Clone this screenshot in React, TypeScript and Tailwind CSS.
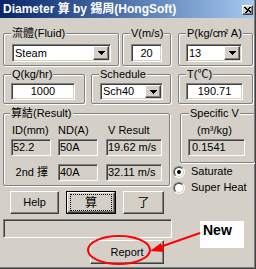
import React from 'react';

const sunken =
  'border border-t-[#808080] border-l-[#808080] border-r-white border-b-white shadow-[inset_1px_1px_0_#404040,inset_-1px_-1px_0_#d4d0c8]';
const raised =
  'border border-t-white border-l-white border-r-[#404040] border-b-[#404040] shadow-[inset_-1px_-1px_0_#808080]';
const etched = 'border border-[#808080] rounded-[2px] shadow-[inset_1px_1px_0_#fff,1px_1px_0_#fff]';

function Group({
  label,
  labelClass,
  boxClass,
  className = '',
  children,
}: {
  label: React.ReactNode;
  labelClass: string;
  boxClass: string;
  className?: string;
  children: React.ReactNode;
}) {
  return (
    <div className={`flex flex-col items-start ${className}`}>
      <span className={`relative z-10 -mb-[7px] h-[13px] px-px leading-[13px] bg-[#d4d0c8] whitespace-nowrap ${labelClass}`}>
        {label}
      </span>
      <div className={`${etched} ${boxClass}`}>{children}</div>
    </div>
  );
}

function Combo({ value, className }: { value: string; className: string }) {
  return (
    <div className={`flex items-center p-px bg-white ${sunken} ${className}`}>
      <span className="flex-1 pl-px leading-[13px]">{value}</span>
      <span className={`w-[16px] h-full flex items-center justify-center bg-[#d4d0c8] ${raised}`}>
        <svg width="7" height="4" shapeRendering="crispEdges">
          <path d="M0 0h7v1h-1v1h-1v1h-1v1h-1v-1h-1v-1h-1v-1h-1z" fill="#000" />
        </svg>
      </span>
    </div>
  );
}

function Edit({ value, className }: { value: string; className: string }) {
  return (
    <div className={`flex items-center justify-center bg-white leading-[13px] ${sunken} ${className}`}>{value}</div>
  );
}

function Field({ value, className }: { value: string; className: string }) {
  return (
    <div className={`flex items-center h-[17px] bg-[#d4d0c8] leading-[13px] whitespace-nowrap ${sunken} ${className}`}>
      {value}
    </div>
  );
}

function Radio({ label, checked, className }: { label: string; checked?: boolean; className: string }) {
  return (
    <div className={`flex items-center h-[13px] ${className}`}>
      <span className="flex w-[12px] h-[12px] rounded-full border border-t-[#808080] border-l-[#808080] border-r-white border-b-white">
        <span className="flex flex-1 items-center justify-center rounded-full border border-t-[#404040] border-l-[#404040] border-r-[#d4d0c8] border-b-[#d4d0c8] bg-white">
          {checked && <span className="w-[4px] h-[4px] rounded-full bg-black" />}
        </span>
      </span>
      <span className="ml-[6px] leading-[13px] whitespace-nowrap">{label}</span>
    </div>
  );
}

export default function App() {
  return (
    <div className="relative w-[256px] h-[269px] overflow-hidden border-r border-b border-[#404040] bg-[#d4d0c8] text-[11px] text-black font-['Liberation_Sans','Noto_Sans_CJK_TC',sans-serif]">
      <div className="flex flex-col h-full border-r border-b border-[#808080]">
        {/* title bar */}
        <div className="flex items-start h-[18px] pl-[3px] pr-px bg-linear-to-r from-[#0a246a] to-[#a6caf0]">
          <span className="flex-1 text-[12px] leading-[18px] font-bold text-white whitespace-nowrap">
            Diameter 算 by 錫周(HongSoft)
          </span>
          <span className={`mt-[5px] w-[11px] h-[10px] flex items-center justify-center bg-[#d4d0c8] ${raised}`}>
            <svg width="7" height="6" shapeRendering="crispEdges">
              <path d="M0 0h2v1h1v1h1v-1h1v-1h2v1h-1v1h-1v1h1v1h1v1h1v1h-2v-1h-1v-1h-1v1h-1v1h-2v-1h1v-1h1v-1h-1v-1h-1z" fill="#000" />
            </svg>
          </span>
        </div>

        <div className="flex flex-col pl-[3px] pt-[9px]">
          {/* row 1 */}
          <div className="flex">
            <Group label="流體(Fluid)" labelClass="ml-[8px]" boxClass="w-[116px] h-[33px] pt-[10px] pl-[8px]">
              <Combo value="Steam" className="w-[99px] h-[18px]" />
            </Group>
            <Group className="ml-[3px]" label="V(m/s)" labelClass="ml-[8px]" boxClass="w-[49px] h-[33px] pt-[10px] pl-[8px]">
              <Edit value="20" className="w-[31px] h-[18px]" />
            </Group>
            <Group
              className="ml-[7px]"
              label={
                <>
                  P(kg/<span className="tracking-[-1px]">cm</span>
                  <span className="text-[9px] align-top">²</span> A)
                </>
              }
              labelClass="ml-[8px]"
              boxClass="w-[75px] h-[33px] pt-[10px] pl-[7px]"
            >
              <Combo value="13" className="w-[56px] h-[18px]" />
            </Group>
          </div>

          {/* row 2 */}
          <div className="flex mt-[2px]">
            <Group label="Q(kg/hr)" labelClass="ml-[8px]" boxClass="w-[82px] h-[30px] pt-[8px] pl-[7px]">
              <Edit value="1000" className="w-[64px] h-[17px]" />
            </Group>
            <Group className="ml-[6px]" label="Schedule" labelClass="ml-[8px]" boxClass="w-[80px] h-[30px] pt-[8px] pl-[8px]">
              <Combo value="Sch40" className="w-[63px] h-[17px]" />
            </Group>
            <Group className="ml-[7px]" label="T(℃)" labelClass="ml-[8px]" boxClass="w-[75px] h-[30px] pt-[8px] pl-[7px]">
              <Edit value="190.71" className="w-[57px] h-[17px]" />
            </Group>
          </div>

          {/* lower part */}
          <div className="flex items-start mt-[3px]">
            <div className="flex flex-col">
              <Group label="算結(Result)" labelClass="ml-[7px]" boxClass="w-[167px] h-[73px] pt-[10px]">
                <div className="flex h-[13px] leading-[13px] whitespace-nowrap">
                  <span className="ml-[7px] w-[40px] pl-px">ID(mm)</span>
                  <span className="ml-[7px] w-[40px]">ND(A)</span>
                  <span className="ml-[8px] w-[56px] pl-[2px]">V Result</span>
                </div>
                <div className="flex mt-[2px]">
                  <Field value="52.2" className="ml-[7px] w-[40px] pl-px" />
                  <Field value="50A" className="ml-[7px] w-[40px] pl-px" />
                  <Field value="19.62 m/s" className="ml-[8px] w-[56px] pl-px" />
                </div>
                <div className="flex items-center mt-[8px]">
                  <span className="ml-[7px] w-[40px] pr-[3px] text-right leading-[13px] whitespace-nowrap">2nd 擇</span>
                  <Field value="40A" className="ml-[7px] w-[40px] pl-px" />
                  <Field value="32.11 m/s" className="ml-[8px] w-[56px] pl-px" />
                </div>
              </Group>

              <div className="flex mt-[5px]">
                <div className={`ml-[7px] w-[49px] h-[23px] flex items-center justify-center ${raised}`}>Help</div>
                <div className="ml-[7px] w-[50px] h-[23px] border border-black">
                  <div className={`w-full h-full flex items-center justify-center ${raised}`}>
                    <span className="w-[42px] h-[17px] flex items-center justify-center border border-dotted border-black text-[12px]">
                      算
                    </span>
                  </div>
                </div>
                <div className={`ml-[7px] w-[41px] h-[23px] flex items-center justify-center text-[12px] ${raised}`}>了</div>
              </div>

              <div className={`mt-[5px] w-[169px] h-[19px] ${sunken}`} />

              <div className={`mt-[2px] ml-[87px] w-[74px] h-[24px] flex items-center justify-center ${raised}`}>Report</div>
            </div>

            <div className="flex flex-col ml-px">
              <Group className="ml-[7px]" label="Specific V" labelClass="ml-[9px]" boxClass="w-[75px] h-[50px] pt-[10px] pl-[7px]">
                <div className="h-[13px] pl-[9px] leading-[13px] whitespace-nowrap">(m³/kg)</div>
                <Field value="0.1541" className="mt-[2px] w-[57px] pl-[3px]" />
              </Group>
              <Radio checked label="Saturate" className="mt-[2px]" />
              <Radio label="Super Heat" className="mt-[3px]" />
            </div>
          </div>
        </div>
      </div>

      {/* annotation drawn over the dialog */}
      <div className="absolute left-[200px] top-[221px] w-[44px] h-[27px] bg-white pl-[3px] pt-px text-[14px] leading-[16px] font-bold">
        New
      </div>
      <svg className="absolute left-0 top-0 pointer-events-none" width="256" height="269">
        <ellipse cx="119" cy="250" rx="31" ry="14" fill="none" stroke="#ff0000" strokeWidth="2" />
        <line x1="200" y1="233" x2="160" y2="247" stroke="#ff0000" strokeWidth="2" />
        <polygon points="150,251 161,243 164,252" fill="#ff0000" />
      </svg>
    </div>
  );
}
